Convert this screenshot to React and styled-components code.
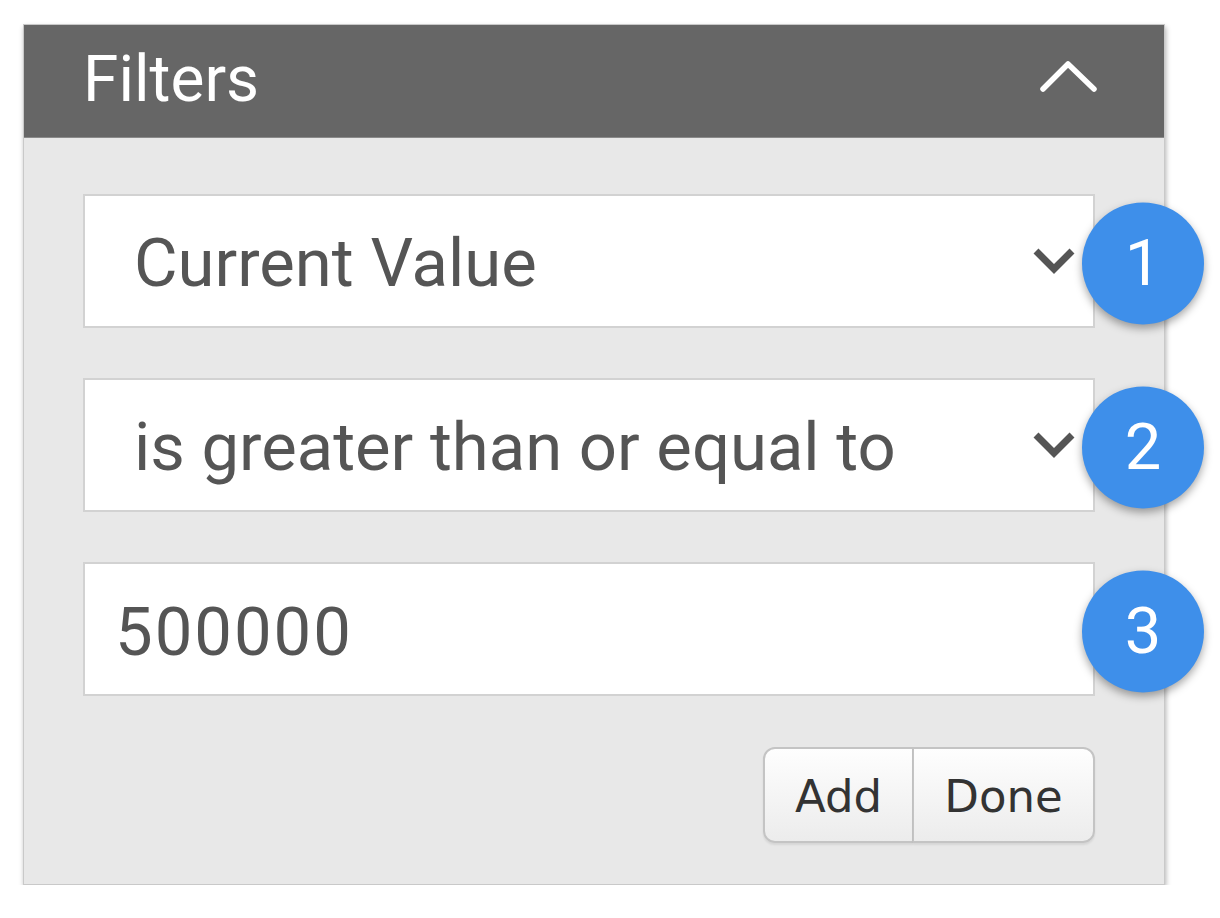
import React, { useState } from "react"
import styled, { createGlobalStyle } from 'styled-components'

const GlobalStyle = createGlobalStyle`
  html, body {
    margin: 0;
    padding: 0;
    background: #fff;
  }
  body {
    font-family: Roboto, "Liberation Sans", sans-serif;
  }
`

const ChevronUp = () => (
  <svg width="62" height="40" viewBox="0 0 62 40">
    <polyline points="5,32 30,7 56,32" fill="none" stroke="#fff" strokeWidth="5.5" strokeLinecap="round" strokeLinejoin="round" />
  </svg>
)

const ChevronDown = () => (
  <svg width="42" height="30" viewBox="0 0 42 30">
    <polyline points="3,5 21,23 39,5" fill="none" stroke="#555" strokeWidth="7" strokeLinejoin="miter" />
  </svg>
)

const Select = ({ value, step }) => (
  <Field>
    <SelectBox>
      <span>{value}</span>
      <ChevronDown />
    </SelectBox>
    <Badge>{step}</Badge>
  </Field>
)

const App = () => {
  // value box is editable
  const [amount, setAmount] = useState("500000")

  return (
    <>
      <GlobalStyle />
      <Panel>
        <Header>
          <Title>Filters</Title>
          <ChevronUp />
        </Header>
        <Body>
          <Select value="Current Value" step="1" />
          <Select value="is greater than or equal to" step="2" />
          <Field>
            <ValueInput type="text" value={amount} onChange={(e) => setAmount(e.target.value)} />
            <Badge>3</Badge>
          </Field>
          <Actions>
            <GroupButton>Add</GroupButton>
            <GroupButton wide>Done</GroupButton>
          </Actions>
        </Body>
      </Panel>
    </>
  )
}

// styles

const Panel = styled.div`
  margin: 24px 0 0 23px;
  width: 1142px;
  height: 861px;
  box-sizing: border-box;
  background: #e8e8e8;
  border: 1px solid #c9c9c9;
  box-shadow: 1px 3px 5px rgba(0,0,0,0.3);
  display: flex;
  flex-direction: column;
`

const Header = styled.div`
  height: 113px;
  background: #666;
  border-bottom: 1px solid #8a8a8a;
  box-sizing: border-box;
  display: flex;
  align-items: center;
  justify-content: space-between;
  padding: 0 64px 0 59px;

  svg {
    margin-top: -8px;
  }
`

const Title = styled.h1`
  margin: 0;
  margin-top: -4px;
  font-family: Roboto, "Liberation Sans", sans-serif;
  font-size: 64px;
  font-weight: normal;
  color: #fff;
`

const Body = styled.div`
  display: flex;
  flex-direction: column;
  gap: 50px;
  padding: 56px 69px 0 59px;
`

const Field = styled.div`
  position: relative;
  height: 134px;
`

const SelectBox = styled.div`
  height: 100%;
  box-sizing: border-box;
  background: #fff;
  border: 2px solid #d2d2d2;
  display: flex;
  align-items: center;
  justify-content: space-between;
  padding: 0 18px 0 49px;
  font-size: 67px;
  color: #555;

  span {
    margin-top: 4px;
  }
`

const ValueInput = styled.input`
  width: 100%;
  height: 100%;
  box-sizing: border-box;
  background: #fff;
  border: 2px solid #d2d2d2;
  padding: 6px 0 0 30px;
  font-family: Roboto, "Liberation Sans", sans-serif;
  font-size: 67px;
  letter-spacing: 2px;
  color: #555;
  outline: none;
`

const Badge = styled.div`
  position: absolute;
  right: -109px;
  top: 50%;
  transform: translateY(-48%);
  width: 122px;
  height: 122px;
  border-radius: 50%;
  background: #3e8fea;
  box-shadow: 0 4px 8px rgba(0,0,0,0.35);
  color: #fff;
  font-family: Roboto, sans-serif;
  font-size: 65px;
  display: flex;
  align-items: center;
  justify-content: center;
`

const Actions = styled.div`
  display: flex;
  justify-content: flex-end;
  margin-top: 1px;
`

const GroupButton = styled.button`
  width: ${p => p.wide ? '182px' : '150px'};
  height: 96px;
  padding: 2px 0 0;
  font-family: "DejaVu Sans", Verdana, sans-serif;
  font-size: 45px;
  color: #333;
  background: linear-gradient(#fefefe, #ececec);
  border: 2px solid #c4c4c4;
  box-shadow: 0 2px 2px rgba(0,0,0,0.08);

  &:first-child {
    border-radius: 12px 0 0 12px;
    border-right: 1px solid #c4c4c4;
  }
  &:last-child {
    border-radius: 0 12px 12px 0;
    border-left: 1px solid #c4c4c4;
  }
`

export default App
